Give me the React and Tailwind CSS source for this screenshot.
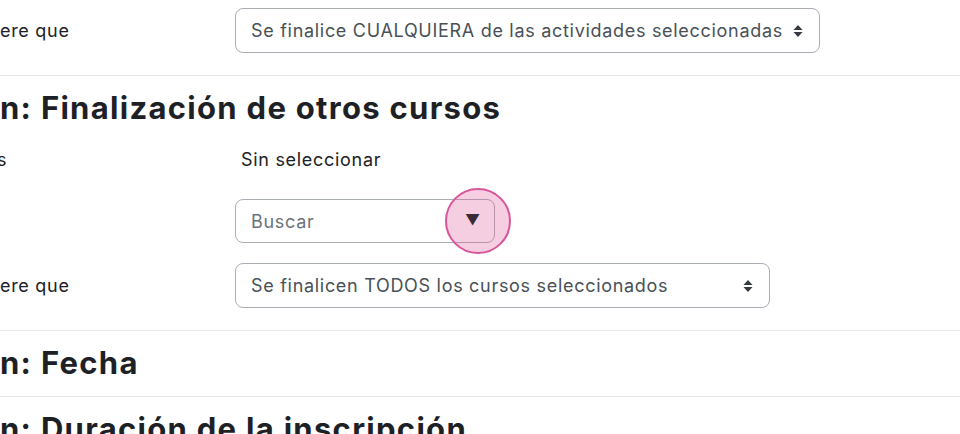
import React from "react";

function UpDown() {
  return (
    <svg width="10" height="14" viewBox="0 0 10 14" className="shrink-0">
      <path d="M5 1 L9.5 6 H0.5 Z" fill="#343a40" />
      <path d="M5 13 L9.5 8 H0.5 Z" fill="#343a40" />
    </svg>
  );
}

function SelectBox({ text, width }) {
  return (
    <div
      className={`${width} h-[45px] flex items-center justify-between pl-[15px] pr-[16px] border border-[#a9aeb4] rounded-[8px] bg-white text-[#495057]`}
    >
      <span className="whitespace-nowrap">{text}</span>
      <UpDown />
    </div>
  );
}

function Divider() {
  return <div className="h-px bg-[#e5e7ea]" />;
}

function Heading({ children }) {
  return (
    <h3 className="mt-[14px] h-[36px] leading-[36px] text-[31px] font-bold text-[#1d2125] whitespace-nowrap tracking-[1.3px]">
      {children}
    </h3>
  );
}

export default function App() {
  return (
    <div className="w-[960px] h-[434px] overflow-hidden bg-white text-[18px] tracking-[0.7px] text-[#1d2125] font-['Inter',sans-serif]">
      <div className="flex items-center pt-[8px]">
        <div className="w-[235px]">ere que</div>
        <SelectBox
          width="w-[585px]"
          text="Se finalice CUALQUIERA de las actividades seleccionadas"
        />
      </div>
      <div className="mt-[22px]">
        <Divider />
      </div>
      <Heading>n: Finalización de otros cursos</Heading>

      <div className="flex items-center mt-[20px] h-[26px]">
        <div className="w-[235px] -ml-[3px]">s</div>
        <div className="pl-[9px]">Sin seleccionar</div>
      </div>

      <div className="flex mt-[27px]">
        <div className="w-[235px]" />
        <div className="relative w-[260px] h-[44px] flex items-center border border-[#a9aeb4] rounded-[8px] pl-[15px] text-[#6a737b]">
          Buscar
          {/* highlighted dropdown toggle */}
          <div className="absolute left-[209px] top-[-12px] w-[66px] h-[66px] rounded-full border-2 border-[#d9559a] bg-[rgba(222,80,150,0.28)] flex items-center justify-center">
            <span className="text-[#3b2a38] text-[15px] tracking-normal leading-none -ml-[11px] -mt-[3px]">▼</span>
          </div>
        </div>
      </div>

      <div className="flex items-center mt-[20px]">
        <div className="w-[235px]">ere que</div>
        <SelectBox
          width="w-[535px]"
          text="Se finalicen TODOS los cursos seleccionados"
        />
      </div>
      <div className="mt-[22px]">
        <Divider />
      </div>
      <Heading>n: Fecha</Heading>
      <div className="mt-[15px]">
        <Divider />
      </div>
      <Heading>n: Duración de la inscripción</Heading>
    </div>
  );
}
